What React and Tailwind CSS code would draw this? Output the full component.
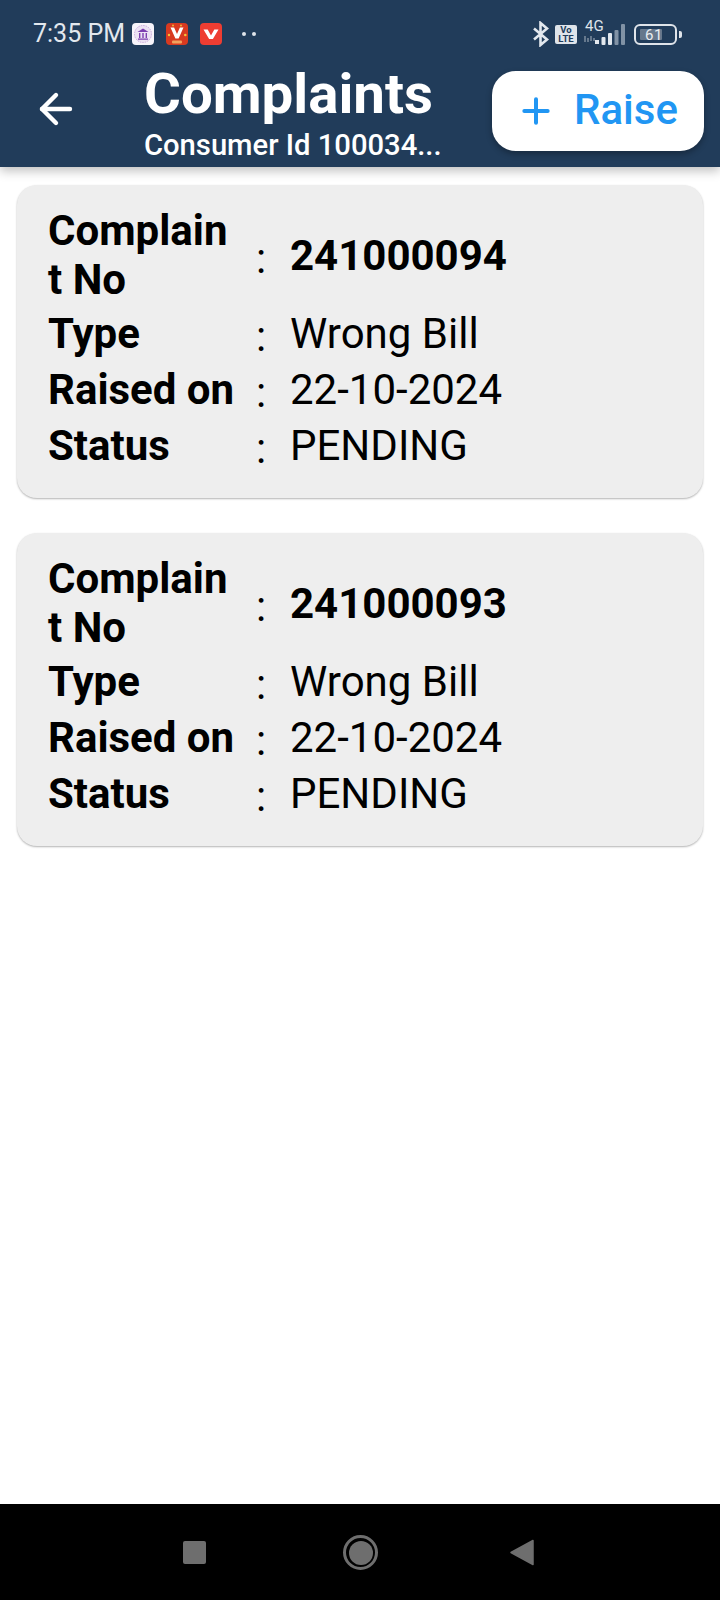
import React from "react";
import { ArrowLeft, Plus } from "lucide-react";

function Bank() {
  return (
    <svg width="22" height="22" viewBox="0 0 22 22">
      <rect width="22" height="22" rx="4" fill="#f7f4fa" />
      <circle cx="11" cy="11" r="8.5" fill="#ece2f3" stroke="#c9a7dd" strokeWidth="1" strokeDasharray="1.5 1" />
      <path d="M5.5 9 11 5.5 16.5 9Z" fill="#7d3fb0" />
      <path d="M7 10h1.4v5H7ZM10.3 10h1.4v5h-1.4ZM13.6 10H15v5h-1.4ZM6 15.5h10v1.3H6Z" fill="#7d3fb0" />
    </svg>
  );
}

function RedV({ festive }) {
  return (
    <svg width="22" height="22" viewBox="0 0 22 22">
      <rect width="22" height="22" rx="4" fill={festive ? "#d83a20" : "#ee3d32"} />
      <path d={festive ? "M4.5 4.5h3.6L11 11 13.9 4.5h3.6L12.6 15.5H9.4Z" : "M3.5 6.5h4.2l3.3 6 3.3-6h4.2l-5.6 9.5H9.1Z"} fill="#fff" />
      {festive && (
        <>
          <circle cx="3" cy="12" r="1.2" fill="#f5c33b" />
          <circle cx="19.3" cy="12" r="1.3" fill="#f5c33b" />
          <circle cx="7" cy="2.5" r="0.9" fill="#f5c33b" />
          <circle cx="15" cy="2.5" r="0.9" fill="#f5c33b" />
          <rect x="6" y="17.5" width="10" height="3" rx="1" fill="#f2a35e" />
        </>
      )}
    </svg>
  );
}

function Bluetooth() {
  return (
    <svg width="18" height="26" viewBox="0 0 18 26" fill="none" stroke="#e3e8ee" strokeWidth="2.6">
      <path d="M2 7.5 15 18.5 8.5 24V2L15 7.5 2 18.5" />
    </svg>
  );
}

function VoLte() {
  return (
    <div className="w-[22px] h-[19px] rounded-[2px] bg-[#dfe4ea] flex flex-col items-center justify-center text-[#213c5a] text-[9.5px] leading-[9px] font-bold">
      <span>Vo</span>
      <span>LTE</span>
    </div>
  );
}

function Signal() {
  return (
    <div className="relative w-[42px] h-[26px] text-[#dfe4ea]">
      <span className="absolute left-[1px] top-[-3px] text-[15px] leading-[16px]">4G</span>
      <svg className="absolute left-0 top-0" width="42" height="26" viewBox="0 0 42 26">
        <path d="M1 15v6M4 17v4M7 15v5M10 17v3" stroke="#8a99a9" strokeWidth="1.3" />
        <rect x="11" y="19" width="4" height="4" fill="#e3e8ee" />
        <rect x="17.5" y="16" width="4" height="8" rx="1" fill="#e3e8ee" />
        <rect x="24" y="12" width="4" height="12" rx="1" fill="#e3e8ee" />
        <rect x="30.5" y="9" width="4" height="15" rx="1" fill="#8192a5" />
        <rect x="37" y="3" width="4" height="21" rx="1" fill="#8192a5" />
      </svg>
    </div>
  );
}

function Battery() {
  return (
    <div className="flex items-center">
      <div className="relative w-[43px] h-[21px] rounded-[6px] border-2 border-[#dfe4ea] flex items-center pl-[4px] overflow-hidden">
        <div className="w-[22px] h-[11px] rounded-[1px] bg-[#66788c]" />
        <span className="absolute left-[9px] top-[-1px] text-[#e9edf1] text-[15px] leading-[20px] tracking-[0.5px]">61</span>
      </div>
      <div className="ml-[2px] w-[3px] h-[7px] rounded-r-[2px] bg-[#dfe4ea]" />
    </div>
  );
}

function StatusBar() {
  return (
    <div className="h-[68px] flex items-center pl-[33px] pr-[38px]">
      <span className="text-[25px] text-[#e3e8ee] w-[99px] whitespace-nowrap">7:35 PM</span>
      <div className="flex items-center gap-[12px]">
        <Bank />
        <RedV festive />
        <RedV />
      </div>
      <div className="flex items-center gap-[6px] ml-[20px]">
        <div className="w-[4px] h-[4px] rounded-full bg-[#dfe4ea]" />
        <div className="w-[4px] h-[4px] rounded-full bg-[#dfe4ea]" />
      </div>
      <div className="ml-auto flex items-center">
        <Bluetooth />
        <div className="ml-[5px]"><VoLte /></div>
        <div className="ml-[7px]"><Signal /></div>
        <div className="ml-[8px]"><Battery /></div>
      </div>
    </div>
  );
}

function Header() {
  return (
    <header className="bg-[#213c5a] h-[167px] shadow-[0_4px_10px_rgba(0,0,0,0.25)] relative">
      <StatusBar />
      <div className="flex items-start pr-[16px]">
        <div className="w-[144px] pl-[32px] pt-[17px] text-white">
          <ArrowLeft size={48} strokeWidth={2.2} />
        </div>
        <div className="w-[300px] text-white mt-[-6px]">
          <div className="text-[56.4px] leading-[64px] font-bold whitespace-nowrap">Complaints</div>
          <div className="text-[29.2px] leading-[34px] font-medium mt-[2px] whitespace-nowrap">Consumer Id 100034...</div>
        </div>
        <button className="ml-auto mt-[3px] w-[212px] h-[80px] rounded-[24px] bg-white shadow-[0_3px_6px_rgba(0,0,0,0.3)] flex items-center pl-[24px] text-[#2196f3]">
          <Plus size={40} strokeWidth={2.4} />
          <span className="ml-[18px] mt-[-3px] text-[42px] font-medium">Raise</span>
        </button>
      </div>
    </header>
  );
}

function Row({ label, value, bold, className }) {
  return (
    <div className={"flex items-center " + className}>
      <div className="w-[188px] break-words text-[42px] leading-[49px] font-bold text-black">{label}</div>
      <div className="w-[50px] text-center text-[42px] leading-[49px] text-black translate-y-[3px]">:</div>
      <div className={"ml-[4px] text-[42px] leading-[49px] text-black whitespace-nowrap " + (bold ? "font-bold" : "")}>{value}</div>
    </div>
  );
}

function Card({ no }) {
  return (
    <div className="mx-[17px] h-[313px] rounded-[20px] bg-[#eeeeee] shadow-[0_1px_2px_rgba(0,0,0,0.3)] pl-[31px] pt-[21px]">
      <Row label="Complaint No" value={no} bold className="" />
      <Row label="Type" value="Wrong Bill" className="mt-[5px]" />
      <Row label="Raised on" value="22-10-2024" className="mt-[7px]" />
      <Row label="Status" value="PENDING" className="mt-[7px]" />
    </div>
  );
}

function NavBar() {
  return (
    <div className="h-[96px] bg-black relative">
      <div className="absolute left-[183px] top-[37px] w-[23px] h-[23px] rounded-[2px] bg-[#6e6e6e]" />
      <div className="absolute left-[343px] top-[31px] w-[35px] h-[35px] rounded-full border-[3px] border-[#6e6e6e] flex items-center justify-center">
        <div className="w-[24px] h-[24px] rounded-full bg-[#6e6e6e]" />
      </div>
      <svg className="absolute left-[510px] top-[35px]" width="24" height="27" viewBox="0 0 24 27">
        <path d="M23 1.5V25.5L1 13.5Z" fill="#6e6e6e" stroke="#6e6e6e" strokeWidth="1.5" strokeLinejoin="round" />
      </svg>
    </div>
  );
}

export default function App() {
  return (
    <div className="w-[720px] h-[1600px] bg-white flex flex-col font-[family-name:Roboto] overflow-hidden">
      <Header />
      <main className="flex-1 flex flex-col gap-[35px] pt-[18px]">
        <Card no="241000094" />
        <Card no="241000093" />
      </main>
      <NavBar />
    </div>
  );
}
